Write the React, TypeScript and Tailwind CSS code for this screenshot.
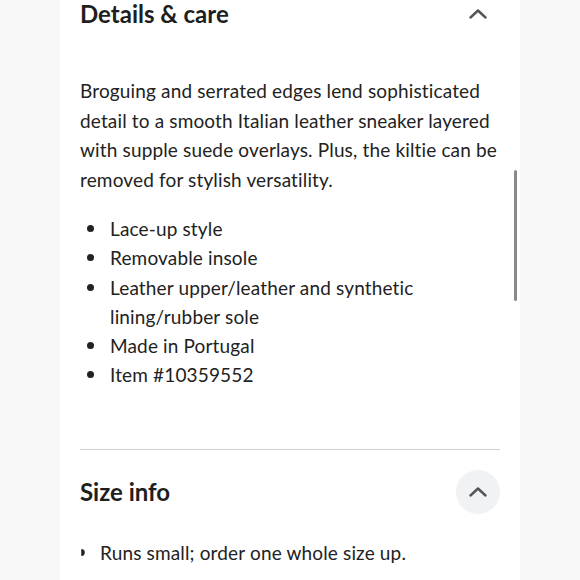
import { useState } from "react";

function Chevron({ className = "" }: { className?: string }) {
  return (
    <svg viewBox="0 0 18 10" className={className} fill="none">
      <path
        d="M1.5 8.5 L9 1.5 L16.5 8.5"
        stroke="currentColor"
        strokeWidth="2.4"
        strokeLinecap="round"
        strokeLinejoin="round"
      />
    </svg>
  );
}

const bullets = [
  "Lace-up style",
  "Removable insole",
  "Leather upper/leather and synthetic lining/rubber sole",
  "Made in Portugal",
  "Item #10359552",
];

export default function App() {
  const [open, setOpen] = useState(true);

  return (
    <div
      className="h-[580px] w-full overflow-hidden bg-[#f8f8f8] flex justify-center"
      style={{ fontFamily: "Lato, 'Noto Sans', sans-serif" }}
    >
      <div className="relative w-[460px] bg-white px-5 text-[#1e1e1e]">
        <div className="flex items-center justify-between h-[28px]">
          <h2 className="text-[24px] font-bold leading-none">
            Details &amp; care
          </h2>
          <button
            onClick={() => setOpen(!open)}
            className="w-[44px] h-[28px] flex items-center justify-center text-[#555]"
          >
            <Chevron className="w-[18px] h-[10px]" />
          </button>
        </div>

        <p className="mt-[48px] text-[19px] leading-[29.5px] tracking-[0.15px] text-[#222]">
          Broguing and serrated edges lend sophisticated detail to a smooth
          Italian leather sneaker layered with supple suede overlays. Plus, the
          kiltie can be removed for stylish versatility.
        </p>

        <ul className="mt-[20px] text-[19px] leading-[29.3px] tracking-[0.15px] text-[#222]">
          {bullets.map((b) => (
            <li key={b} className="flex">
              <span className="w-[30px] shrink-0 flex justify-start pl-[7px] pt-[11px]">
                <span className="block w-[7px] h-[7px] rounded-full bg-[#222]" />
              </span>
              <span className="pr-[70px]">{b}</span>
            </li>
          ))}
        </ul>

        <div className="mt-[59px] h-px bg-[#cfcfcf]" />

        <div className="flex items-center justify-between mt-[20px]">
          <h2 className="text-[24px] font-bold leading-none">Size info</h2>
          <button className="w-[44px] h-[44px] rounded-full bg-[#f0f2f4] flex items-center justify-center text-[#555]">
            <Chevron className="w-[18px] h-[10px]" />
          </button>
        </div>

        <div className="flex items-center mt-[24px] text-[19px] leading-[29px] tracking-[0.15px] text-[#222]">
          <svg viewBox="0 0 4 8" className="w-[4px] h-[7px] ml-[1px] mr-[15px]">
            <path d="M0 0 A4 4 0 0 1 0 8 Z" fill="#222" />
          </svg>
          <span>Runs small; order one whole size up.</span>
        </div>

        <div className="absolute left-[454px] top-[170px] w-[3px] h-[131px] rounded-full bg-[#8a8a8a]" />
      </div>
    </div>
  );
}
